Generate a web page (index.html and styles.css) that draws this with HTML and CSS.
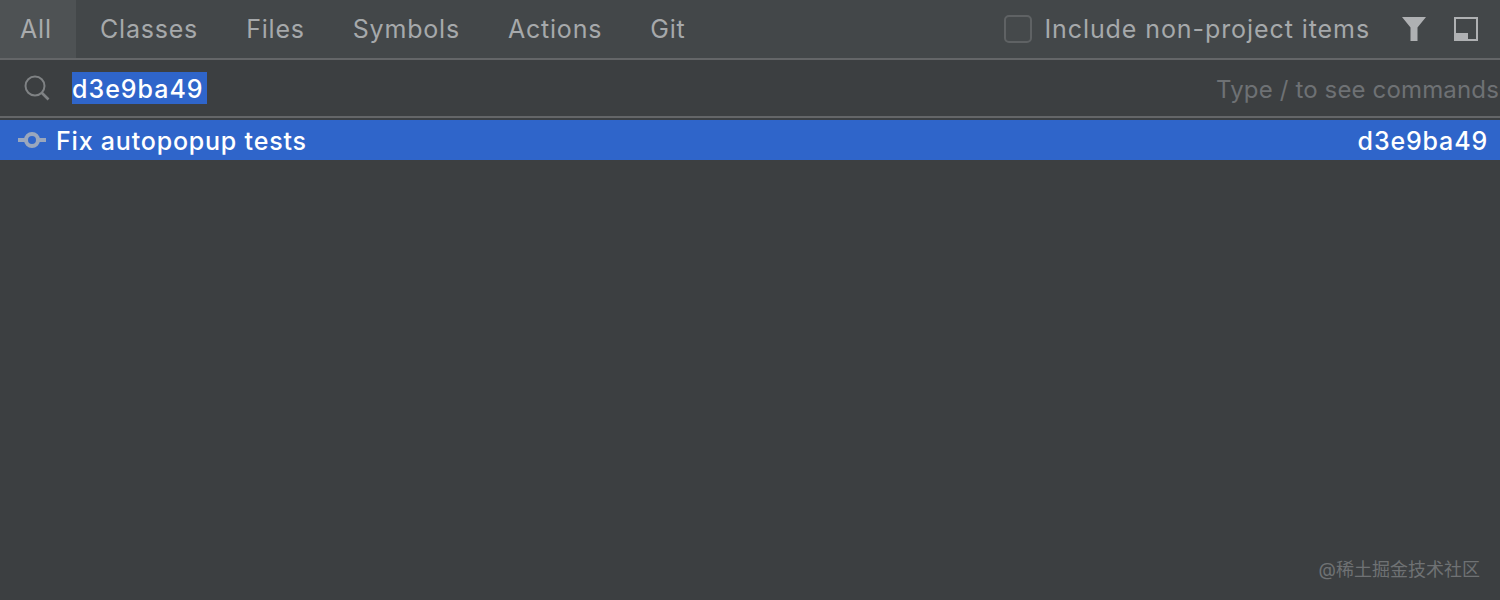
FILE: index.html
```html
<!DOCTYPE html>
<html lang="en">
<head>
<meta charset="utf-8">
<title>Search Everywhere</title>
<link rel="stylesheet" href="styles.css">
</head>
<body>
<div class="panel">
  <header class="topbar">
    <nav class="tabs">
      <div class="tab active">All</div>
      <div class="tab">Classes</div>
      <div class="tab">Files</div>
      <div class="tab">Symbols</div>
      <div class="tab">Actions</div>
      <div class="tab">Git</div>
    </nav>
    <div class="options">
      <span class="checkbox"></span>
      <span class="include">Include non-project items</span>
      <svg class="icon-filter" width="26" height="26" viewBox="0 0 26 26"><path d="M1 1H25L16.5 11.5V25H9.5V11.5Z" fill="#afb1b3"/></svg>
      <svg class="icon-dock" width="24" height="24" viewBox="0 0 24 24"><path fill-rule="evenodd" d="M0 0H24V24H0ZM2 2V16H14V22H22V2Z" fill="#afb1b3"/></svg>
    </div>
  </header>
  <div class="search">
    <svg class="icon-search" width="26" height="26" viewBox="0 0 26 26"><circle cx="11" cy="11" r="9.5" fill="none" stroke="#7f8284" stroke-width="2"/><path d="M17.5 17.5L24.5 24.5" stroke="#7f8284" stroke-width="2.6"/></svg>
    <span class="query">d3e9ba49</span>
    <span class="hint">Type / to see commands</span>
  </div>
  <div class="result">
    <svg class="icon-commit" width="30" height="16" viewBox="0 0 30 16"><path d="M1 8H8M22 8H29" stroke="#9aa7bd" stroke-width="3.8"/><circle cx="15" cy="8" r="6" fill="#2f65ca" stroke="#9aa7bd" stroke-width="4"/></svg>
    <span class="title">Fix autopopup tests</span>
    <span class="hash">d3e9ba49</span>
  </div>
  <div class="watermark">@稀土掘金技术社区</div>
</div>
</body>
</html>
```
FILE: styles.css
```css
* { box-sizing: border-box; }
html, body { margin: 0; height: 100%; }
body {
  background: #3c3f41;
  font-family: Inter, "Liberation Sans", "Noto Sans CJK SC", sans-serif;
  overflow: hidden;
}
.panel { position: relative; width: 1500px; height: 600px; background: #3c3f41; }
.topbar {
  display: flex;
  justify-content: space-between;
  height: 60px;
  background: #434749;
  border-bottom: 2px solid #646668;
}
.tabs { display: flex; }
.tab {
  display: flex;
  align-items: center;
  padding: 0 24px;
  font-size: 25px;
  letter-spacing: 0.8px;
  color: #a6a9ab;
}
.tab.active { width: 76px; padding: 0 0 0 20px; background: #4e5254; color: #a9abad; }
.options { display: flex; align-items: center; padding-right: 22px; }
.checkbox {
  width: 28px;
  height: 28px;
  border: 2px solid #5f6264;
  border-radius: 5px;
  background: #45494b;
  margin-right: 12px;
}
.include { font-size: 25px; letter-spacing: 0.92px; color: #a6a9ab; margin-right: 31px; }
.icon-filter { margin-right: 27px; }
.search {
  display: flex;
  align-items: center;
  height: 58px;
  padding-left: 24px;
  border-bottom: 2px solid #646668;
}
.query {
  margin-left: 22px;
  height: 32px;
  line-height: 34px;
  padding: 0 3px 0 0;
  background: #2f65ca;
  color: #fff;
  font-size: 25px;
  font-weight: 500;
  letter-spacing: 1px;
}
.hint {
  margin-left: auto;
  padding-top: 3px;
  font-size: 24px;
  letter-spacing: 0.15px;
  color: #6e7174;
  white-space: nowrap;
  margin-right: 1px;
}
.result {
  display: flex;
  align-items: center;
  height: 40px;
  margin-top: 2px;
  padding: 0 12px 0 17px;
  background: #2f65ca;
  color: #fff;
  font-size: 25px;
  font-weight: 500;
  letter-spacing: 0.8px;
}
.title { margin-left: 9px; padding-top: 2px; }
.hash { margin-left: auto; padding-top: 2px; letter-spacing: 0.85px; }
.watermark {
  position: absolute;
  right: 20px;
  bottom: 19px;
  font-size: 18px;
  color: #6f7274;
}
```
